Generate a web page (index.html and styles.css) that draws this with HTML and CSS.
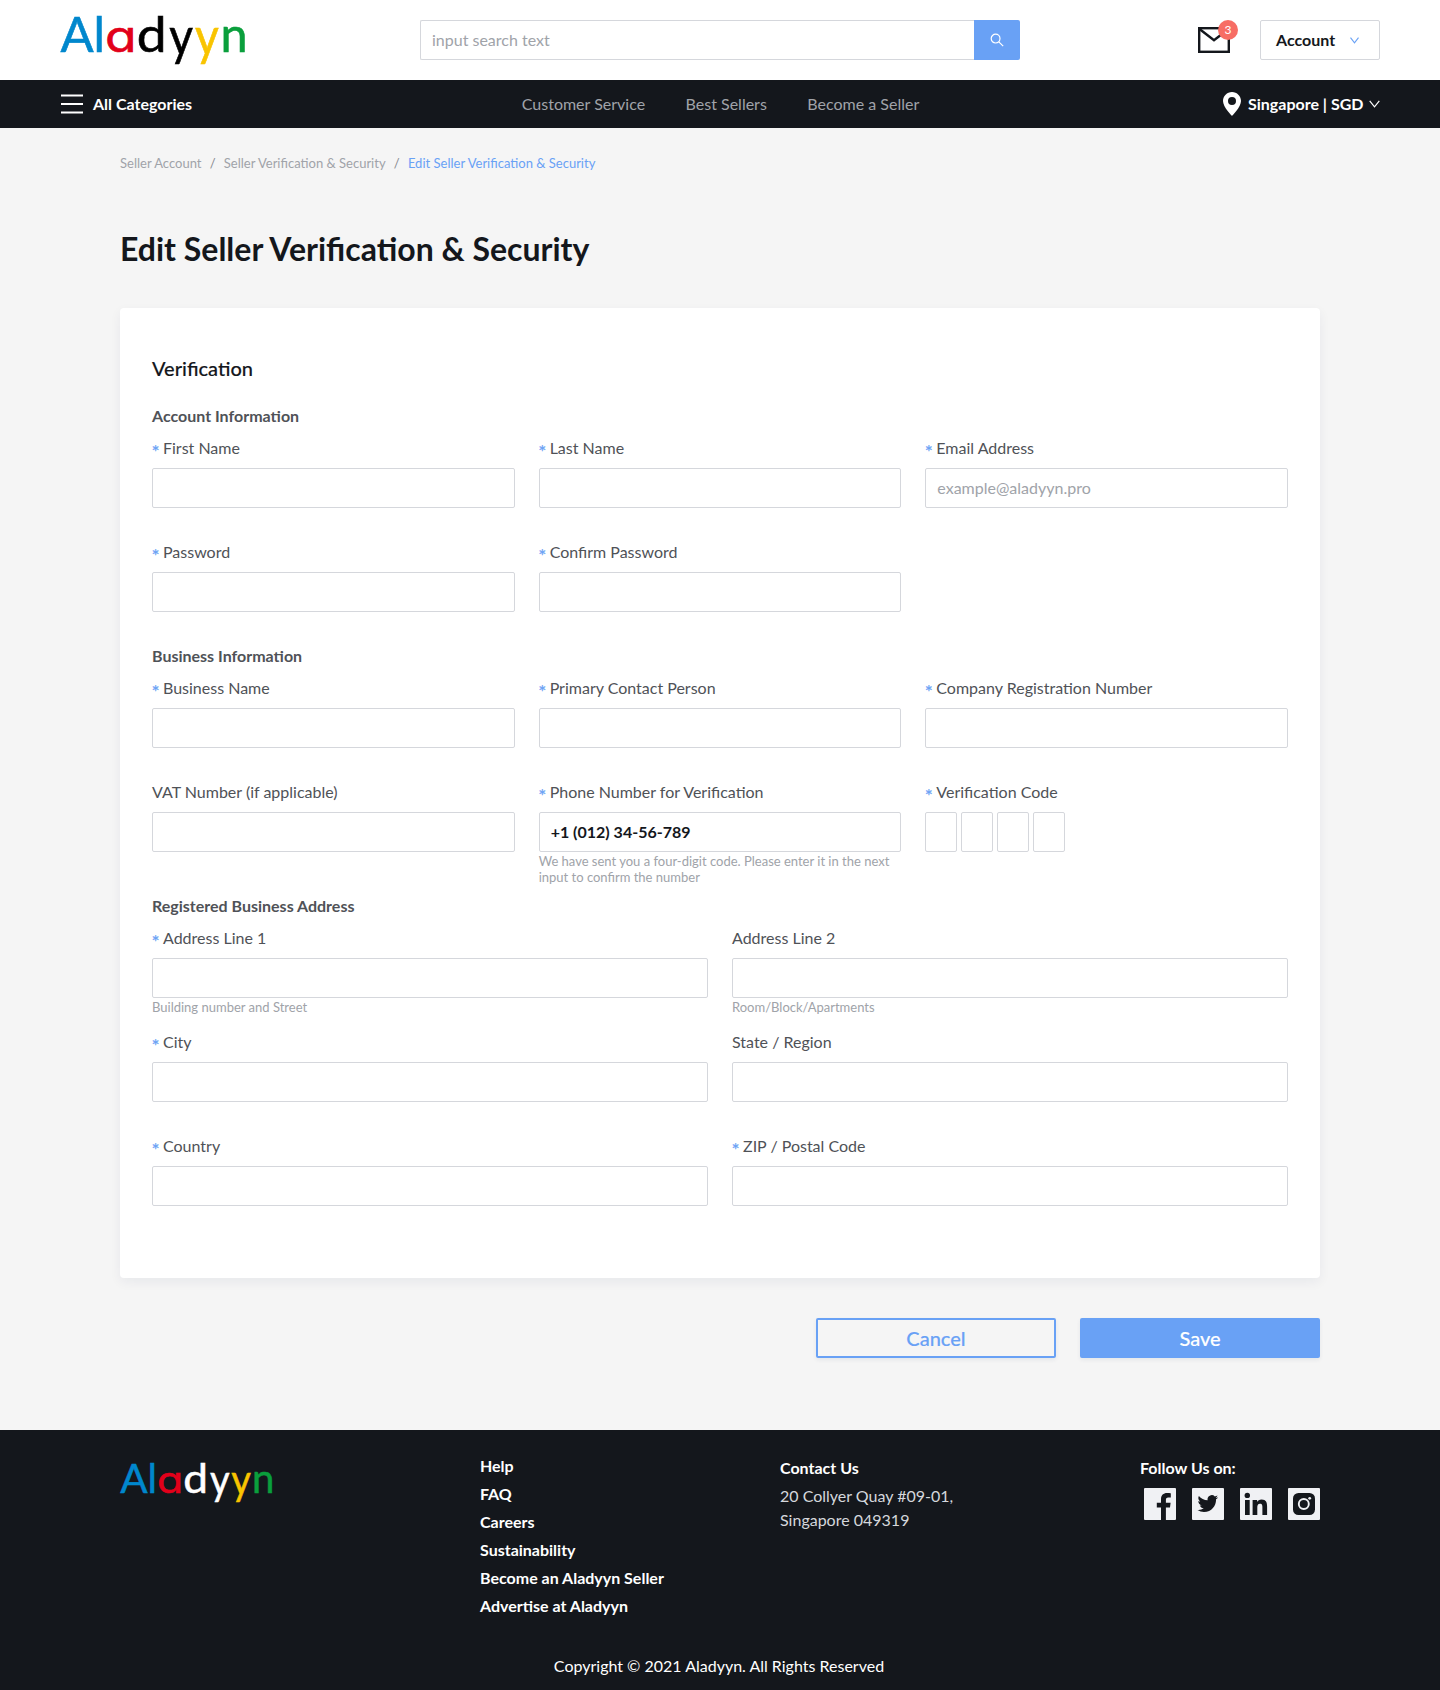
FILE: index.html
```html
<!DOCTYPE html>
<html lang="en">
<head>
<meta charset="utf-8">
<title>Edit Seller Verification &amp; Security</title>
<link rel="stylesheet" href="styles.css">
</head>
<body>
<header class="topbar">
  <svg class="logo" viewBox="0 0 186 52">
    <text class="l-blue" transform="translate(.5 38.3) scale(1.01 1)">A</text>
    <text class="l-blue" transform="translate(33.4 38.3)">l</text>
    <text class="l-red l-round" transform="translate(45 38.3) scale(1.16 1)">a</text>
    <text class="l-cur" transform="translate(76.800 38.3) scale(1.1 1)">d</text>
    <text class="l-cur" transform="translate(109.200 40.600) scale(.95 1.06)">y</text>
    <text class="l-yellow" transform="translate(134.900 40.600) scale(.95 1.06)">y</text>
    <text class="l-green" transform="translate(160.400 38.3)">n</text>
  </svg>
  <div class="search">
    <span class="search-input">input search text</span>
    <span class="search-btn"><svg width="14" height="14" viewBox="0 0 14 14" fill="none" stroke="#fff" stroke-width="1.2"><circle cx="5.6" cy="5.6" r="4.4"/><path d="M8.8 8.8 13.2 13.2"/></svg></span>
  </div>
  <div class="mail">
    <svg width="32" height="26" viewBox="0 0 32 26" fill="none" stroke="#14171c" stroke-width="2.4"><rect x="1.2" y="1.2" width="29.6" height="23.6"/><path d="M1.8 2.2 16 13.2 30.2 2.2"/></svg>
    <span class="badge">3</span>
  </div>
  <div class="account">Account<svg width="9" height="7" viewBox="0 0 9 7" fill="none" stroke="#69a1f5" stroke-width="1.1"><path d="M.5.6 4.5 5.9 8.5.6"/></svg></div>
</header>

<nav class="navbar">
  <div class="categories"><svg width="22" height="20" viewBox="0 0 22 20" stroke="#fff" stroke-width="2"><path d="M0 1.6h22M0 10h22M0 18.4h22"/></svg>All Categories</div>
  <div class="nav-links"><a>Customer Service</a><a>Best Sellers</a><a>Become a Seller</a></div>
  <div class="region">
    <svg width="18" height="24" viewBox="0 0 18 24" fill="#fff"><path fill-rule="evenodd" d="M9 0C4 0 0 4 0 9c0 6 9 15 9 15s9-9 9-15c0-5-4-9-9-9Zm0 5a4 4 0 1 1 0 8 4 4 0 0 1 0-8Z"/></svg>
    <span>Singapore | SGD</span>
    <svg class="region-arrow" width="11" height="8" viewBox="0 0 11 8" fill="none" stroke="#fff" stroke-width="1.2"><path d="M.7.8 5.5 6.8 10.3.8"/></svg>
  </div>
</nav>

<main class="page">
  <div class="breadcrumb"><span>Seller Account</span><i>/</i><span>Seller Verification &amp; Security</span><i>/</i><span class="current">Edit Seller Verification &amp; Security</span></div>
  <h1>Edit Seller Verification &amp; Security</h1>

  <section class="card">
    <h2>Verification</h2>

    <h3>Account Information</h3>
    <div class="grid three">
      <div class="field"><label class="req">First Name</label><div class="input"></div></div>
      <div class="field"><label class="req">Last Name</label><div class="input"></div></div>
      <div class="field"><label class="req">Email Address</label><div class="input placeholder">example@aladyyn.pro</div></div>
      <div class="field"><label class="req">Password</label><div class="input"></div></div>
      <div class="field"><label class="req">Confirm Password</label><div class="input"></div></div>
    </div>

    <h3>Business Information</h3>
    <div class="grid three">
      <div class="field"><label class="req">Business Name</label><div class="input"></div></div>
      <div class="field"><label class="req">Primary Contact Person</label><div class="input"></div></div>
      <div class="field"><label class="req">Company Registration Number</label><div class="input"></div></div>
      <div class="field"><label>VAT Number (if applicable)</label><div class="input"></div></div>
      <div class="field"><label class="req">Phone Number for Verification</label><div class="input value">+1 (012) 34-56-789</div><p class="help">We have sent you a four-digit code. Please enter it in the next input to confirm the number</p></div>
      <div class="field"><label class="req">Verification Code</label><div class="code"><div class="input"></div><div class="input"></div><div class="input"></div><div class="input"></div></div></div>
    </div>

    <h3 class="address-title">Registered Business Address</h3>
    <div class="grid two">
      <div class="field"><label class="req">Address Line 1</label><div class="input"></div><p class="help">Building number and Street</p></div>
      <div class="field"><label>Address Line 2</label><div class="input"></div><p class="help">Room/Block/Apartments</p></div>
      <div class="field"><label class="req">City</label><div class="input"></div></div>
      <div class="field"><label>State / Region</label><div class="input"></div></div>
      <div class="field"><label class="req">Country</label><div class="input"></div></div>
      <div class="field"><label class="req">ZIP / Postal Code</label><div class="input"></div></div>
    </div>
  </section>

  <div class="actions"><a class="btn outline">Cancel</a><a class="btn solid">Save</a></div>
</main>

<footer class="footer">
  <div class="footer-cols">
    <div>
      <svg class="logo logo-small" viewBox="0 0 186 52">
        <text class="l-blue" transform="translate(.2 38.3) scale(1.01 1)">A</text>
        <text class="l-blue" transform="translate(33 38.3)">l</text>
        <text class="l-red l-round" transform="translate(44.600 38.3) scale(1.16 1)">a</text>
        <text class="l-cur" transform="translate(76.400 38.3) scale(1.1 1)">d</text>
        <text class="l-cur" transform="translate(108.800 40.600) scale(.95 1.06)">y</text>
        <text class="l-yellow" transform="translate(134.300 40.600) scale(.95 1.06)">y</text>
        <text class="l-green" transform="translate(159.400 38.3)">n</text>
      </svg>
    </div>
    <div class="footer-links"><a>Help</a><a>FAQ</a><a>Careers</a><a>Sustainability</a><a>Become an Aladyyn Seller</a><a>Advertise at Aladyyn</a></div>
    <div class="contact"><strong>Contact Us</strong><p>20 Collyer Quay #09-01,<br>Singapore 049319</p></div>
    <div class="follow"><strong>Follow Us on:</strong>
      <div class="social">
        <svg width="32" height="32" viewBox="0 0 32 32"><rect width="32" height="32" rx="1" fill="#f0f1f4"/><path fill="#14171c" d="M17 32V19.500h-4.200v-4.800H17V11.200C17 7.200 19.400 5 23 5c1.700 0 3.200.1 3.800.2v4.300h-2.500c-2 0-2.400 1-2.400 2.400v2.800h4.700l-.6 4.800h-4.100V32Z"/></svg>
        <svg width="32" height="32" viewBox="0 0 32 32"><rect width="32" height="32" rx="1" fill="#f0f1f4"/><path fill="#14171c" transform="translate(5.500 5.200) scale(.86)" d="M23.950 4.570a10 10 0 0 1-2.820.77 4.960 4.960 0 0 0 2.160-2.720c-.95.550-2 .950-3.120 1.180a4.920 4.920 0 0 0-8.380 4.480C7.690 8.090 4.070 6.130 1.640 3.160a4.820 4.820 0 0 0-.67 2.480c0 1.710.87 3.210 2.190 4.100a4.900 4.900 0 0 1-2.230-.62v.06a4.920 4.920 0 0 0 3.950 4.830 5 5 0 0 1-2.210.08 4.940 4.940 0 0 0 4.600 3.420A9.870 9.870 0 0 1 0 19.540a13.990 13.990 0 0 0 7.560 2.210c9.050 0 14-7.500 14-13.980 0-.21 0-.42-.02-.63a9.940 9.940 0 0 0 2.410-2.570Z"/></svg>
        <svg width="32" height="32" viewBox="0 0 32 32"><rect width="32" height="32" rx="1" fill="#f0f1f4"/><g fill="#14171c"><circle cx="7.300" cy="7.400" r="2.700"/><path d="M5 12h4.700v15H5zM12.600 12h4.500v2.100c.7-1.300 2.200-2.500 4.500-2.500 4.600 0 5.500 3 5.500 7.100V27h-4.700v-7.300c0-1.800 0-4-2.400-4s-2.700 1.900-2.700 3.900V27h-4.700Z"/></g></svg>
        <svg width="32" height="32" viewBox="0 0 32 32"><rect width="32" height="32" rx="1" fill="#f0f1f4"/><rect x="5" y="5" width="22" height="22" rx="5.500" fill="#14171c"/><circle cx="15.800" cy="16" r="5" fill="none" stroke="#f0f1f4" stroke-width="1.900"/><circle cx="21.700" cy="10.300" r="1.400" fill="#f0f1f4"/></svg>
      </div>
    </div>
  </div>
  <p class="copyright">Copyright © 2021 Aladyyn. All Rights Reserved</p>
</footer>
</body>
</html>
```
FILE: styles.css
```css
* { box-sizing: border-box; }
body { margin: 0; background: #f5f5f5; color: #14171c; font: 400 16px/24px Lato, "Noto Sans", sans-serif; }
h1, h2, h3, p { margin: 0; }
svg { display: block; flex: none; }

.logo { width: 186px; height: 52px; color: #000; overflow: visible; font-family: Lato, sans-serif; font-size: 48.5px; line-height: 1; }
.logo text { stroke-width: .6; }
.logo .l-round { font-family: Inter, sans-serif; font-size: 44.5px; font-feature-settings: "cv11"; }
.l-blue { fill: #0087cd; stroke: #0087cd; }
.l-red { fill: #e2001a; stroke: #e2001a; }
.l-cur { fill: currentColor; stroke: currentColor; }
.l-yellow { fill: #f9c400; stroke: #f9c400; }
.l-green { fill: #0a9f3c; stroke: #0a9f3c; }

.topbar { height: 80px; padding: 0 60px; background: #fff; display: flex; align-items: center; }
.search { display: flex; width: 600px; height: 40px; margin-left: 174px; }
.search-input { flex: 1; border: 1px solid #d5d7dc; border-right: 0; border-radius: 2px 0 0 2px; padding: 7px 11px; color: #a0a3a9; }
.search-btn { width: 46px; display: flex; align-items: center; justify-content: center; background: #69a1f5; border-radius: 0 2px 2px 0; }
.mail { position: relative; margin-left: 178px; }
.badge { position: absolute; left: 20px; top: -7px; width: 20px; height: 20px; border-radius: 50%; background: #f76d64; color: #fff; font-size: 12px; line-height: 20px; text-align: center; }
.account { width: 120px; height: 40px; margin-left: 30px; padding: 0 15px; border: 1px solid #d5d7dc; border-radius: 2px; display: flex; align-items: center; gap: 15px; font-weight: 700; }

.navbar { height: 48px; padding: 0 60px; background: #14171c; color: #fff; display: grid; grid-template-columns: 1fr auto 1fr; align-items: center; }
.categories, .region { display: flex; align-items: center; font-weight: 700; }
.categories { gap: 10px; padding-left: 1px; }
.region { justify-content: flex-end; gap: 7px; padding-right: .5px; }
.region-arrow { margin-left: -2px; }
.nav-links { display: flex; gap: 40.5px; padding-left: 1px; color: #a0a3a9; }

.page { width: 1200px; margin: 0 auto; height: 1302px; padding-top: 25px; }
.breadcrumb { display: flex; gap: 8.2px; height: 20px; font-size: 13px; line-height: 20px; color: #a0a3a9; }
.breadcrumb i { font-style: normal; color: #85888e; }
.breadcrumb .current { color: #69a1f5; }
h1 { margin-top: 56px; font-size: 32px; line-height: 40px; font-weight: 700; }

.card { margin-top: 39px; height: 970px; padding: 46px 32px 40px; background: #fff; border-radius: 4px; box-shadow: 0 4px 12px rgba(20, 40, 80, .06); }
h2 { font-size: 20px; line-height: 28px; font-weight: 500; -webkit-text-stroke: .15px; margin-bottom: 22px; }
h3 { font-size: 16px; line-height: 24px; font-weight: 700; color: #4f5257; margin-bottom: 8px; }
.address-title { margin-top: 10px; }
.grid { display: grid; column-gap: 24px; grid-auto-rows: 104px; }
.three { grid-template-columns: repeat(3, 1fr); }
.two { grid-template-columns: repeat(2, 1fr); }
.field label { display: block; height: 24px; margin-bottom: 8px; color: #4f5257; }
.req::before { content: "*"; display: inline-block; width: 11px; height: 10px; line-height: 16px; vertical-align: -5px; font-size: 19px; text-indent: -.5px; -webkit-text-stroke: .2px; color: #69a1f5; }
.input { height: 40px; border: 1px solid #d5d7dc; border-radius: 2px; padding: 7px 11px; background: #fff; }
.placeholder { color: #a0a3a9; }
.value { font-weight: 700; }
.code { display: flex; gap: 4px; }
.code .input { width: 32px; }
.help { padding-top: 1px; font-size: 13px; line-height: 16px; color: #a0a3a9; }

.actions { display: flex; justify-content: flex-end; gap: 24px; margin-top: 40px; }
.btn { width: 240px; height: 40px; border: 2px solid #69a1f5; border-radius: 2px; font-size: 20px; line-height: 37px; font-weight: 500; -webkit-text-stroke: .15px; text-align: center; box-shadow: 0 2px 4px rgba(20, 40, 80, .07); }
.outline { color: #69a1f5; }
.solid { background: #69a1f5; color: #fff; }

.footer { height: 260px; padding: 22px 120px 0; background: #14171c; color: #fff; }
.footer-cols { display: grid; grid-template-columns: 360px 300px 360px 1fr; height: 202px; }
.logo-small { width: 154px; height: 43px; margin-top: 8.5px; color: #fff; }
.footer-links { display: flex; flex-direction: column; line-height: 28px; font-weight: 700; }
.contact, .follow { padding-top: 4px; }
.contact p { margin-top: 4px; color: #d5d7dc; }
.social { display: flex; gap: 16px; padding-left: 4px; margin-top: 8px; }
.copyright { padding-right: 2px; text-align: center; }
```
